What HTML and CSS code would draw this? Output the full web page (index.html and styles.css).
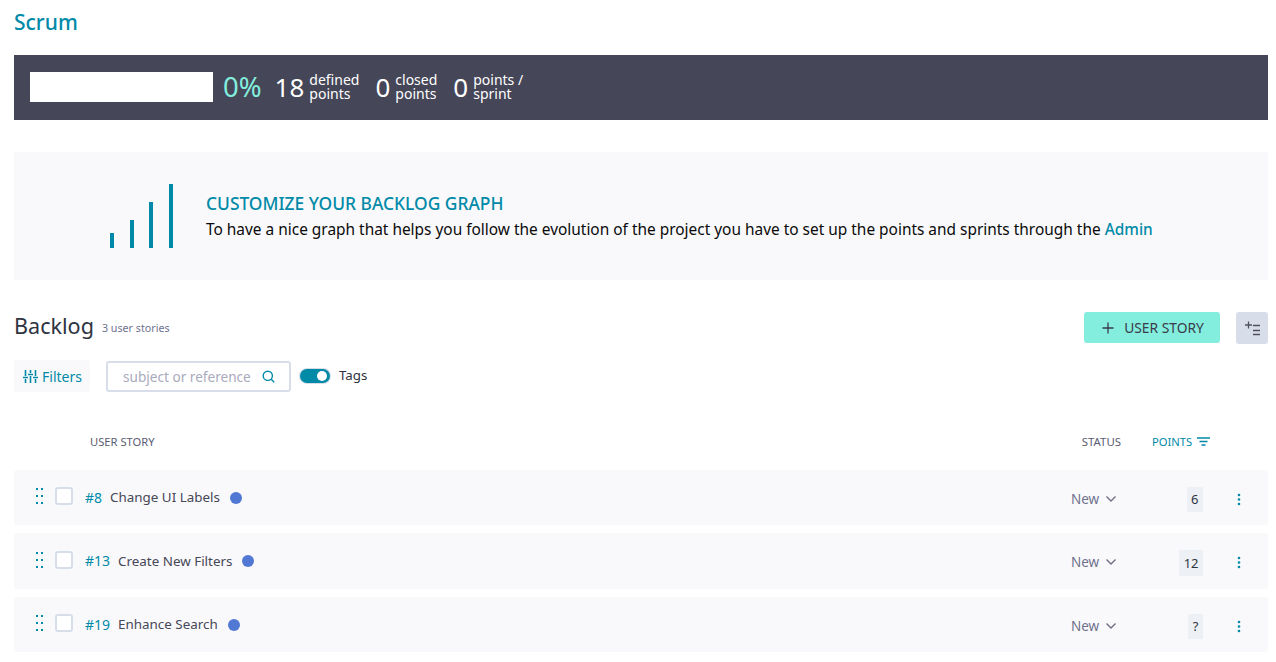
FILE: index.html
```html
<!DOCTYPE html>
<html lang="en">
<head>
  <meta charset="UTF-8">
  <title>Scrum - Backlog</title>
  <link rel="stylesheet" href="styles.css">
</head>
<body>
  <h1 class="page-title">Scrum</h1>

  <div class="summary">
    <div class="progress"></div>
    <span class="percent">0%</span>
    <div class="stat stat-first"><span class="stat-num">18</span><span class="stat-label">defined<br>points</span></div>
    <div class="stat"><span class="stat-num">0</span><span class="stat-label">closed<br>points</span></div>
    <div class="stat"><span class="stat-num">0</span><span class="stat-label">points /<br>sprint</span></div>
  </div>

  <div class="graph-box">
    <div class="graph-bars">
      <span class="gbar gbar-1"></span>
      <span class="gbar gbar-2"></span>
      <span class="gbar gbar-3"></span>
      <span class="gbar gbar-4"></span>
    </div>
    <div class="graph-text">
      <h2>CUSTOMIZE YOUR BACKLOG GRAPH</h2>
      <p>To have a nice graph that helps you follow the evolution of the project you have to set up the points and sprints through the <a href="#">Admin</a></p>
    </div>
  </div>

  <div class="backlog-head">
    <div class="backlog-title"><h2>Backlog</h2><span>3 user stories</span></div>
    <div class="backlog-actions">
      <button class="btn-story">
        <svg width="12" height="12" viewBox="0 0 12 12"><path d="M6 0.500v11M0.500 6h11" stroke="#3a3a4a" stroke-width="1.300" fill="none"/></svg>
        USER STORY
      </button>
      <button class="btn-bulk">
        <svg width="15" height="16" viewBox="0 0 15 16" fill="none" stroke="#4f4f60" stroke-width="1.300"><path d="M3.500 1.500v7M0 5h7M8 5.500h7M8 10.500h7M8 14.500h7"/></svg>
      </button>
    </div>
  </div>

  <div class="filters">
    <div class="btn-filters">
      <svg width="15" height="13" viewBox="0 0 15 13" fill="none" stroke="#008aa8" stroke-width="1.600"><path d="M2.500 0v6M2.500 9v4M7.500 0v3M7.500 6v7M12.500 0v6M12.500 9v4M0 7.500h5M5 4.500h5M10 7.500h5"/></svg>
      Filters
    </div>
    <div class="search">
      <span class="search-text">subject or reference</span>
      <svg width="13" height="13" viewBox="0 0 13 13" fill="none" stroke="#008aa8" stroke-width="1.400"><circle cx="5.800" cy="5.800" r="4.600"/><path d="M9.200 9.200l3 3"/></svg>
    </div>
    <span class="toggle"><span class="knob"></span></span>
    <span class="toggle-label">Tags</span>
  </div>

  <div class="table-head">
    <span class="th-story">USER STORY</span>
    <span class="th-status">STATUS</span>
    <span class="th-points">POINTS
      <svg width="13" height="9" viewBox="0 0 13 9" fill="none" stroke="#008aa8" stroke-width="1.300"><path d="M0 1h13M2.500 4.500h8M4.500 8h4"/></svg>
    </span>
  </div>

  <div class="row">
    <svg class="drag" width="7" height="16" viewBox="0 0 7 16" fill="#008aa8"><rect y="0" width="2" height="2"/><rect x="5" y="0" width="2" height="2"/><rect y="7" width="2" height="2"/><rect x="5" y="7" width="2" height="2"/><rect y="14" width="2" height="2"/><rect x="5" y="14" width="2" height="2"/></svg>
    <span class="check"></span>
    <a class="ref" href="#">#8</a>
    <span class="subject">Change UI Labels</span>
    <span class="dot"></span>
    <span class="status">New <svg width="10" height="6" viewBox="0 0 10 6" fill="none" stroke="#6e6e80" stroke-width="1.400"><path d="M0.500 0.500l4.500 4.500 4.500-4.500"/></svg></span>
    <span class="points-cell"><span class="points">6</span></span>
    <svg class="more" width="4" height="13" viewBox="0 0 4 13" fill="#008aa8"><circle cx="2" cy="2" r="1.300"/><circle cx="2" cy="6.500" r="1.300"/><circle cx="2" cy="11" r="1.300"/></svg>
  </div>
  <div class="row row-tall">
    <svg class="drag" width="7" height="16" viewBox="0 0 7 16" fill="#008aa8"><rect y="0" width="2" height="2"/><rect x="5" y="0" width="2" height="2"/><rect y="7" width="2" height="2"/><rect x="5" y="7" width="2" height="2"/><rect y="14" width="2" height="2"/><rect x="5" y="14" width="2" height="2"/></svg>
    <span class="check"></span>
    <a class="ref" href="#">#13</a>
    <span class="subject">Create New Filters</span>
    <span class="dot"></span>
    <span class="status">New <svg width="10" height="6" viewBox="0 0 10 6" fill="none" stroke="#6e6e80" stroke-width="1.400"><path d="M0.500 0.500l4.500 4.500 4.500-4.500"/></svg></span>
    <span class="points-cell"><span class="points">12</span></span>
    <svg class="more" width="4" height="13" viewBox="0 0 4 13" fill="#008aa8"><circle cx="2" cy="2" r="1.300"/><circle cx="2" cy="6.500" r="1.300"/><circle cx="2" cy="11" r="1.300"/></svg>
  </div>
  <div class="row">
    <svg class="drag" width="7" height="16" viewBox="0 0 7 16" fill="#008aa8"><rect y="0" width="2" height="2"/><rect x="5" y="0" width="2" height="2"/><rect y="7" width="2" height="2"/><rect x="5" y="7" width="2" height="2"/><rect y="14" width="2" height="2"/><rect x="5" y="14" width="2" height="2"/></svg>
    <span class="check"></span>
    <a class="ref" href="#">#19</a>
    <span class="subject">Enhance Search</span>
    <span class="dot"></span>
    <span class="status">New <svg width="10" height="6" viewBox="0 0 10 6" fill="none" stroke="#6e6e80" stroke-width="1.400"><path d="M0.500 0.500l4.500 4.500 4.500-4.500"/></svg></span>
    <span class="points-cell"><span class="points">?</span></span>
    <svg class="more" width="4" height="13" viewBox="0 0 4 13" fill="#008aa8"><circle cx="2" cy="2" r="1.300"/><circle cx="2" cy="6.500" r="1.300"/><circle cx="2" cy="11" r="1.300"/></svg>
  </div>
</body>
</html>
```

FILE: styles.css
```css
body {
  font-family: "Noto Sans", "Open Sans", sans-serif;
  background-color: #fff;
  color: #2e3440;
  margin: 0;
  padding: 0 8px 0 14px;
  overflow: hidden;
}
a {
  color: #008aa8;
  text-decoration: none;
}
.page-title {
  margin: 0;
  height: 55px;
  padding-top: 9px;
  box-sizing: border-box;
  font-size: 21px;
  line-height: 27px;
  font-weight: 500;
  color: #008aa8;
}
.summary {
  display: flex;
  align-items: center;
  box-sizing: border-box;
  height: 65px;
  padding: 0 0 2px 16px;
  background-color: #454658;
  color: #fff;
}
.progress {
  width: 183px;
  height: 30px;
  background: #fff;
}
.percent {
  margin-left: 10px;
  font-size: 27.500px;
  color: #83eedd;
}
.stat {
  display: flex;
  align-items: center;
  margin-left: 16px;
}
.stat-first {
  margin-left: 13px;
}
.stat-num {
  font-size: 26px;
  margin-right: 5px;
}
.stat-label {
  font-size: 14px;
  line-height: 14px;
}
.graph-box {
  display: flex;
  align-items: center;
  height: 128px;
  margin-top: 32px;
  padding-left: 96px;
  background-color: #f9f9fb;
}
.graph-bars {
  display: flex;
  align-items: flex-end;
  gap: 15.500px;
  width: 96px;
  height: 64px;
}
.gbar {
  width: 4px;
  background-color: #008aa8;
}
.gbar-1 { height: 15px; }
.gbar-2 { height: 28px; }
.gbar-3 { height: 46px; }
.gbar-4 { height: 64px; }
.graph-text h2 {
  margin: 0 0 5px;
  font-size: 17.400px;
  line-height: 22px;
  font-weight: 500;
  color: #008aa8;
}
.graph-text p {
  margin: 0;
  font-size: 15.430px;
  line-height: 22px;
  color: #0a0a0a;
}
.graph-text a {
  font-weight: 500;
}
.backlog-head {
  display: flex;
  justify-content: space-between;
  align-items: flex-start;
  margin-top: 32px;
}
.backlog-title {
  display: flex;
  align-items: flex-start;
  gap: 8px;
}
.backlog-title h2 {
  margin: 0;
  font-size: 21.600px;
  line-height: 28px;
  font-weight: 400;
}
.backlog-title span {
  margin-top: 9px;
  font-size: 10.700px;
  line-height: 15px;
  color: #70728f;
}
.backlog-actions {
  display: flex;
  gap: 16px;
}
.btn-story {
  display: flex;
  align-items: center;
  justify-content: center;
  gap: 10px;
  width: 136px;
  height: 31px;
  padding: 0 0 0 2px;
  border: none;
  border-radius: 3px;
  background-color: #83eedd;
  color: #3a3a4a;
  font-family: inherit;
  font-size: 13.800px;
}
.btn-bulk {
  display: flex;
  align-items: center;
  justify-content: center;
  width: 32px;
  height: 32px;
  padding: 0;
  border: none;
  border-radius: 3px;
  background-color: #d8dee9;
}
.filters {
  display: flex;
  align-items: center;
  margin-top: 16px;
  height: 32px;
}
.btn-filters {
  display: flex;
  align-items: center;
  gap: 4px;
  width: 76px;
  height: 32px;
  box-sizing: border-box;
  padding-left: 9px;
  border-radius: 3px;
  background-color: #f9f9fb;
  color: #008aa8;
  font-size: 14px;
}
.search {
  display: flex;
  align-items: center;
  justify-content: space-between;
  box-sizing: border-box;
  width: 185px;
  height: 31px;
  margin-left: 16px;
  padding: 0 14px 0 15px;
  border: 2px solid #d8dee9;
  border-radius: 3px;
  color: #a9aabc;
  font-size: 13.600px;
}
.search-text {
  margin-top: 1px;
}
.toggle {
  position: relative;
  width: 30px;
  height: 14px;
  margin-left: 9px;
  border-radius: 8px;
  background-color: #008aa8;
  box-shadow: 0 0 0 1px #d8dee9;
}
.knob {
  position: absolute;
  top: 2px;
  right: 3px;
  width: 10px;
  height: 10px;
  border-radius: 50%;
  background: #fff;
}
.toggle-label {
  margin-left: 9px;
  margin-top: -3px;
  font-size: 13.300px;
}
.table-head {
  display: flex;
  align-items: center;
  height: 18px;
  margin-top: 40px;
  margin-bottom: 20px;
  font-size: 11.200px;
  color: #5a5c72;
}
.th-story {
  margin-left: 76px;
  flex: 1;
}
.th-status {
  margin-right: 31px;
  font-size: 11.400px;
}
.th-points {
  display: flex;
  align-items: center;
  gap: 5px;
  width: 116px;
  color: #008aa8;
}
.row {
  display: flex;
  align-items: center;
  height: 55px;
  margin-bottom: 8px;
  border-radius: 3px;
  background-color: #f9f9fb;
  font-size: 13.400px;
  color: #464757;
}
.row-tall {
  height: 56px;
}
.drag {
  margin-left: 22px;
  margin-top: -3px;
}
.check {
  box-sizing: border-box;
  width: 18px;
  height: 18px;
  margin-left: 12px;
  margin-top: -3px;
  border: 2px solid #d8dee9;
  border-radius: 3px;
  background: #fff;
}
.ref {
  margin-left: 12px;
  margin-top: -1px;
  font-size: 14px;
}
.subject {
  margin-left: 8px;
  margin-top: -1px;
}
.dot {
  width: 12px;
  height: 12px;
  margin-left: 10px;
  border-radius: 50%;
  background-color: #5178d3;
}
.status {
  display: flex;
  align-items: center;
  gap: 7px;
  margin-left: auto;
  margin-top: 3px;
  width: 70px;
  font-size: 13.500px;
  color: #70728f;
}
.row-tall .status {
  margin-top: 2px;
}
.points-cell {
  display: flex;
  justify-content: flex-end;
  width: 62px;
  margin-top: 4px;
}
.points {
  padding: 0 4.500px;
  height: 25px;
  line-height: 25px;
  text-align: center;
  background-color: #edf0f4;
  color: #2e3440;
  font-size: 13px;
}
.row-tall .points {
  height: 26px;
  line-height: 26px;
}
.more {
  margin-left: 34px;
  margin-right: 27px;
  margin-top: 3px;
}
```
